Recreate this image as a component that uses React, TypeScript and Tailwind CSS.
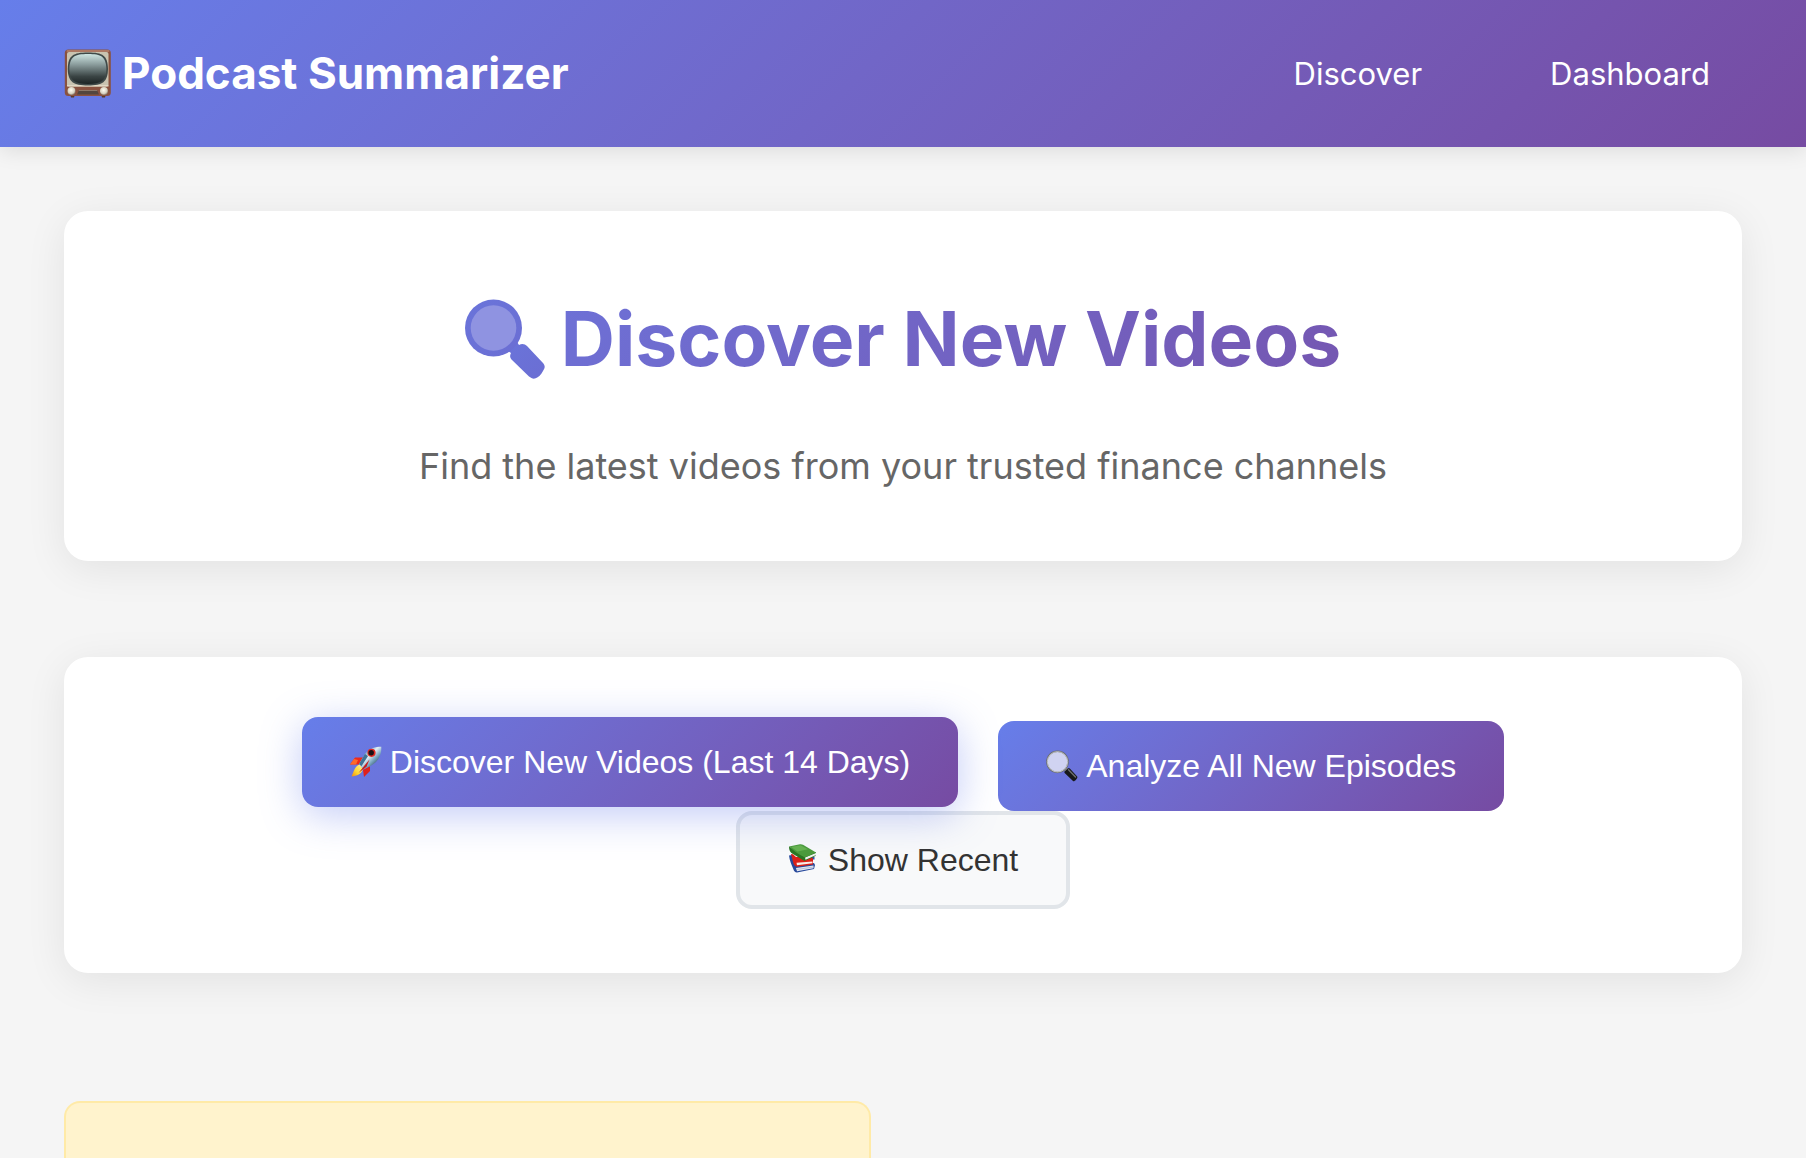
import React from "react";

function TvIcon({ className }: { className?: string }) {
  return (
    <svg viewBox="0 0 48 50" className={className} aria-hidden="true">
      <defs>
        <linearGradient id="tvScreen" x1="0" y1="0" x2="0" y2="1">
          <stop offset="0" stopColor="#cfe6e3" />
          <stop offset="0.35" stopColor="#8b9d9d" />
          <stop offset="0.75" stopColor="#3a4444" />
          <stop offset="1" stopColor="#1d2424" />
        </linearGradient>
        <radialGradient id="tvKnob" cx="0.45" cy="0.4" r="0.6">
          <stop offset="0" stopColor="#fffdf0" />
          <stop offset="0.7" stopColor="#d8d2c0" />
          <stop offset="1" stopColor="#8a7f70" />
        </radialGradient>
      </defs>
      <path d="M6 45h5l-1 3.500H7zM37 45h5l-1 3.500h-3z" fill="#5a3a2c" />
      <rect x="0.800" y="0.500" width="46" height="46.500" rx="3.500" fill="#8a523f" />
      <rect x="2.500" y="1.200" width="43" height="1.600" rx="0.800" fill="#b98570" />
      <rect x="3" y="3" width="41.500" height="34.500" rx="2" fill="#c9c3b0" />
      <rect x="3" y="36" width="41.500" height="1.500" fill="#e0d8c4" />
      <path d="M24 3.500c15 0 19.600 3 20 16.500C43.800 33 38.500 36.500 24 36.500S4 33 3.700 20C4 6.500 9 3.500 24 3.500z" fill="#3f4948" />
      <path d="M24 4.900c13.300 0 17.900 2.600 18.400 15.100C42.200 31.800 37 35 24 35S5.600 31.800 5.300 20C5.700 7.500 10.700 4.900 24 4.900z" fill="url(#tvScreen)" />
      <path d="M15 41h18l2 4.500H13z" fill="#54463d" />
      <path d="M15 41h18l.4 1H14.600z" fill="#8c7868" />
      <circle cx="7.500" cy="42" r="4" fill="url(#tvKnob)" />
      <circle cx="40" cy="42" r="4" fill="url(#tvKnob)" />
    </svg>
  );
}

function TintedMagnifier({ className }: { className?: string }) {
  return (
    <svg viewBox="0 0 80 80" className={className} aria-hidden="true">
      <defs>
        <linearGradient id="lensTint" x1="0" y1="0" x2="1" y2="1">
          <stop offset="0" stopColor="#6a74da" />
          <stop offset="1" stopColor="#6b6ed3" />
        </linearGradient>
      </defs>
      <path
        d="M50 40L54 46C57 44 60 45 62 47L78 64C80.500 67 80 69 78 72C76 76 73 78.500 70 79.500C68 80 66 79 64 77.500L46.500 60.500C44.500 58 45 56 46 54L40 50z"
        fill="url(#lensTint)"
      />
      <circle cx="28.500" cy="29" r="28.500" fill="url(#lensTint)" />
      <circle cx="28.500" cy="29" r="22.800" fill="#8f93e1" />
    </svg>
  );
}

function RocketIcon({ className }: { className?: string }) {
  return (
    <svg viewBox="0 0 32 32" className={className} aria-hidden="true">
      <defs>
        <linearGradient id="rocketBody" x1="0.200" y1="0.200" x2="0.800" y2="0.800">
          <stop offset="0" stopColor="#4f86ad" />
          <stop offset="0.400" stopColor="#e3eff5" />
          <stop offset="0.700" stopColor="#7ba6c2" />
          <stop offset="1" stopColor="#34536b" />
        </linearGradient>
        <linearGradient id="rocketFlame" x1="1" y1="0" x2="0" y2="1">
          <stop offset="0" stopColor="#fff7a0" />
          <stop offset="0.600" stopColor="#ffd52e" />
          <stop offset="1" stopColor="#f28a12" />
        </linearGradient>
      </defs>
      <path d="M13 11.500L5 11.500L0 18.500L9 18.500z" fill="#ee2a1b" />
      <path d="M4 13L0 18.500L6 18.500L8 14z" fill="#ff6a2a" />
      <path d="M20 20L20 25L14 31L13 24z" fill="#e0211b" />
      <path d="M9.500 18.500C5 20 4 25 1.500 30.500C7 30 11.500 28 13 23z" fill="url(#rocketFlame)" />
      <path d="M31.300 .8C25 .8 19 2.500 15 8L9 18L13.500 23C19 21 24.500 18.500 28 13.500C31 9 31.500 5 31.300 .8z" fill="url(#rocketBody)" />
      <path d="M9 18L15 8L18 10L11.500 20.300z" fill="#3f7396" />
      <path d="M14.500 19.500L19.500 13.500L16.500 20.700L8.500 27z" fill="#c61d1d" />
      <circle cx="21.500" cy="6.800" r="4.100" fill="#df2a24" />
      <circle cx="21.200" cy="6.800" r="2.700" fill="#1a1216" />
    </svg>
  );
}

function MagnifierIcon({ className }: { className?: string }) {
  return (
    <svg viewBox="0 0 32 32" className={className} aria-hidden="true">
      <path d="M17.500 19.500L20.500 17L23 20L20 22z" fill="#9a9a9a" />
      <path d="M18.500 21.500L22 18.300C22.600 18 23.300 18.100 23.800 18.600L31.200 26.500C31.800 27.200 31 28.500 30 29.800C28.700 31.200 27.600 31.600 27 31L18.900 23.300C18.300 22.700 18.200 22 18.500 21.500z" fill="#17181a" />
      <path d="M22.500 19.800L29.500 27" stroke="#6d6f70" strokeWidth="1.500" strokeLinecap="round" />
      <circle cx="11.500" cy="11.800" r="10.600" fill="#d0d3f1" stroke="#6a6d72" strokeWidth="1.500" />
      <circle cx="11.500" cy="11.800" r="10.200" fill="none" stroke="#c7cacb" strokeWidth="0.900" />
    </svg>
  );
}

function BooksIcon({ className }: { className?: string }) {
  return (
    <svg viewBox="0 0 32 32" className={className} aria-hidden="true">
      <path d="M1 11.500L4 11L9 22L26 19L27 21L26 25L9 28.500C7 28.500 6 27 5.300 25C3.500 21 1.500 16 1 11.500z" fill="#27499b" />
      <path d="M8 24L25.500 21.500V24.300L9 27.300z" fill="#e4e8f2" />
      <path d="M8.500 25.500L25.500 23" stroke="#9aa6c8" strokeWidth="0.600" />
      <path d="M24 12.500L26.500 13V15.500H24z" fill="#2f51a4" />
      <path d="M3 10C5 9.500 7 12 8 13L24 13L25 15V20.500L9 22.800C7 22.500 6 21 5.500 19.500z" fill="#db2118" />
      <path d="M8.500 18.800L24.500 17.500V19.300L9 21.300z" fill="#f8ece9" />
      <path d="M1 2.500C1 6 2 8.500 5 10L16.500 17L27.500 12L28 8L17 12z" fill="#2a7722" />
      <path d="M17 13.500L28 9V11L17.500 15.800z" fill="#f0f3ee" />
      <path d="M1 2.500L12 0.300C13 0 14 0.300 15 0.800L28 8.500L17 13.500C11 11 6 7 1 2.500z" fill="#4b9b3b" />
      <path d="M3 3L12.500 1.200L20 5.300L9.500 7.500z" fill="#66b34f" />
    </svg>
  );
}

const card = "rounded-3xl bg-white shadow-[0_8px_40px_rgba(0,0,0,0.08)]";
const button =
  "flex cursor-pointer items-center gap-2 rounded-2xl px-12 font-['Liberation_Sans',Arial,sans-serif] text-[32px] leading-[38px]";
const primary = "bg-linear-135 from-[#667eea] to-[#764ba2] py-[26px] text-white";

export default function App() {
  return (
    <div className="flex min-h-screen flex-col bg-[#f5f5f5] font-[Inter,sans-serif] text-[#333]">
      <header className="flex items-center justify-between bg-linear-135 from-[#667eea] to-[#764ba2] px-16 py-10 text-white shadow-[0_4px_20px_rgba(0,0,0,0.1)]">
        <div className="flex items-center gap-2.5 text-[44px] leading-[67px] font-bold">
          <TvIcon className="h-[50px] w-12" />
          <span>Podcast Summarizer</span>
        </div>
        <nav className="flex gap-16 text-[31px] leading-[51px]">
          <a href="#discover" className="px-8">Discover</a>
          <a href="#dashboard" className="px-8">Dashboard</a>
        </nav>
      </header>

      <main className="flex flex-1 flex-col px-16 pt-16">
        <section className={`${card} mb-24 flex flex-col items-center p-16 text-center`}>
          <h1 className="mb-8 flex w-full items-center justify-center gap-4 bg-linear-135 from-[#667eea] to-[#764ba2] bg-clip-text text-[75px] leading-[128px] font-bold text-transparent">
            <TintedMagnifier className="size-20" />
            <span>Discover New Videos</span>
          </h1>
          <p className="text-[36px] leading-[62px] text-[#666]">
            Find the latest videos from your trusted finance channels
          </p>
        </section>

        <section className={`${card} mb-32 flex flex-wrap justify-center gap-x-10 p-16`}>
          <button
            type="button"
            className={`${button} ${primary} relative z-10 -translate-y-1 shadow-[0_8px_40px_rgba(102,126,234,0.4)]`}
          >
            <RocketIcon className="size-8" />
            <span>Discover New Videos (Last 14 Days)</span>
          </button>
          <button type="button" className={`${button} ${primary}`}>
            <MagnifierIcon className="size-8" />
            <span>Analyze All New Episodes</span>
          </button>
          <button
            type="button"
            className={`${button} border-4 border-[#e1e5e9] bg-[#f8f9fa] py-[26px] text-[#333]`}
          >
            <BooksIcon className="size-8" />
            <span>Show Recent</span>
          </button>
        </section>

        <section className="grid flex-1 grid-cols-2 gap-16">
          <div className="rounded-t-2xl border-2 border-b-0 border-[#ffeaa7] bg-[#fff3cd]" />
        </section>
      </main>
    </div>
  );
}
